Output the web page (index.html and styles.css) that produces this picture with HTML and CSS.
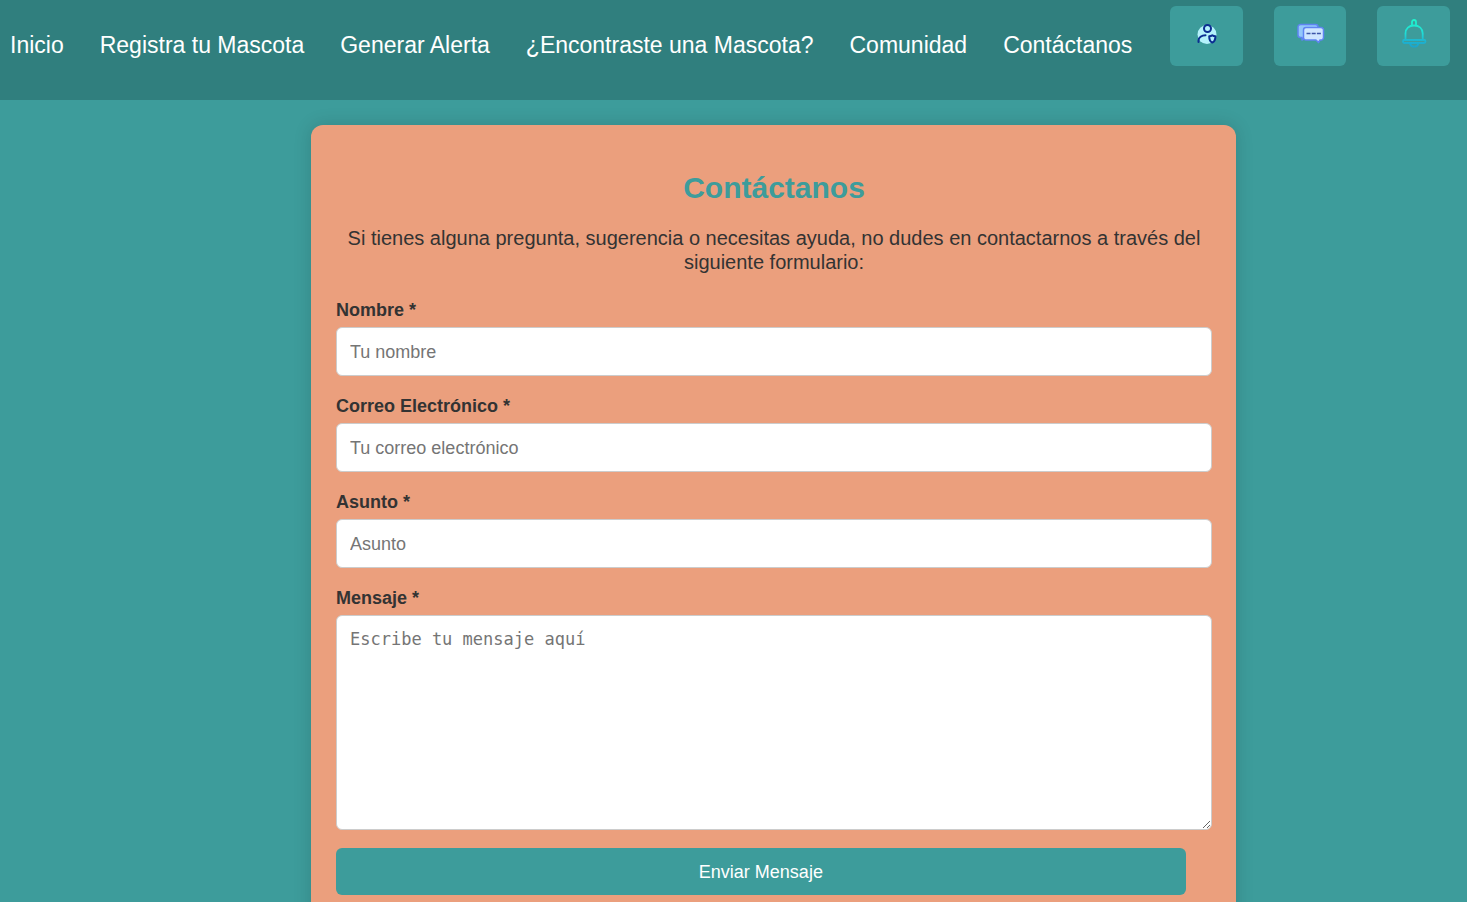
FILE: index.html
```html
<!DOCTYPE html>
<html lang="es">
<head>
  <meta charset="utf-8">
  <meta name="viewport" content="width=device-width, initial-scale=1">
  <title>Contáctanos</title>
  <link rel="stylesheet" href="styles.css">
</head>
<body>
  <header class="site-header">
    <nav class="nav">
      <a class="nav-link" href="#">Inicio</a>
      <a class="nav-link" href="#">Registra tu Mascota</a>
      <a class="nav-link" href="#">Generar Alerta</a>
      <a class="nav-link" href="#">¿Encontraste una Mascota?</a>
      <a class="nav-link" href="#">Comunidad</a>
      <a class="nav-link" href="#">Contáctanos</a>
    </nav>
    <div class="actions">
      <button class="icon-button" type="button" aria-label="Perfil">
        <svg class="icon" viewBox="0 0 30 30" fill="none" aria-hidden="true">
          <circle cx="15" cy="15.500" r="9.500" fill="#b4f1fb"/>
          <g stroke="#0b2e91" stroke-width="2" stroke-linecap="round" stroke-linejoin="round">
            <circle cx="15.500" cy="9.500" r="3.500"/>
            <path d="M6.500 23v-1.500c0-3 3.200-5.200 7-5.200"/>
            <path d="M20.300 16.200c-1 .8-2 1-3.100 1 0 3.300.8 5.500 3.100 6.300 2.300-.8 3.100-3 3.100-6.300-1.100 0-2.100-.2-3.100-1z"/>
          </g>
        </svg>
      </button>
      <button class="icon-button" type="button" aria-label="Mensajes">
        <svg class="icon" viewBox="0 0 30 30" fill="none" aria-hidden="true">
          <g stroke="#5f84f2" stroke-width="1.500" stroke-linejoin="round">
            <path d="M5.500 5.500h15a2.500 2.500 0 0 1 2.500 2.500v9a2.500 2.500 0 0 1-2.500 2.500H9.500L7 21v-2.500H5.500A2.500 2.500 0 0 1 3 16V8a2.500 2.500 0 0 1 2.500-2.500z" fill="#93c8fb"/>
            <path d="M11 8.500h15a2.500 2.500 0 0 1 2.500 2.500v7.500a2.500 2.500 0 0 1-2.500 2.500h-1L23.500 23.500 21 21H11a2.500 2.500 0 0 1-2.500-2.500V11A2.500 2.500 0 0 1 11 8.500z" fill="#cfe6ff"/>
          </g>
          <path d="M11.500 14.500h14.500" stroke="#3d56a8" stroke-width="1.300" stroke-dasharray="4 1.200"/>
        </svg>
      </button>
      <button class="icon-button" type="button" aria-label="Notificaciones">
        <svg class="icon" viewBox="0 0 30 30" fill="none" aria-hidden="true">
          <defs>
            <linearGradient id="bell" gradientUnits="userSpaceOnUse" x1="15" y1="0" x2="15" y2="29">
              <stop offset="0" stop-color="#1ff5cc"/>
              <stop offset="0.500" stop-color="#20dcd6"/>
              <stop offset="0.750" stop-color="#1eb4cf"/>
              <stop offset="1" stop-color="#1ba2cc"/>
            </linearGradient>
          </defs>
          <g stroke="url(#bell)" stroke-width="1.800" stroke-linejoin="round">
            <path d="M13 6.500V3a2 2 0 0 1 4 0v3.500"/>
            <path d="M6.500 21v-6.500C6.500 9.500 10 6.500 15 6.500s8.700 3 8.700 8V21"/>
            <path d="M5.500 21h19.500a1.200 1.200 0 0 1 0 3H5.500a1.200 1.200 0 0 1 0-3z"/>
            <path d="M11 24.500c.5 2 2.200 3.200 4.200 3.200s3.700-1.200 4.200-3.200"/>
          </g>
        </svg>
      </button>
    </div>
  </header>

  <main class="page">
    <section class="card">
      <h1 class="card-title">Contáctanos</h1>
      <p class="card-intro">Si tienes alguna pregunta, sugerencia o necesitas ayuda, no dudes en contactarnos a través del siguiente formulario:</p>
      <form class="form">
        <div class="field">
          <label class="field-label" for="nombre">Nombre *</label>
          <input class="field-control" id="nombre" type="text" placeholder="Tu nombre" required>
        </div>
        <div class="field">
          <label class="field-label" for="correo">Correo Electrónico *</label>
          <input class="field-control" id="correo" type="email" placeholder="Tu correo electrónico" required>
        </div>
        <div class="field">
          <label class="field-label" for="asunto">Asunto *</label>
          <input class="field-control" id="asunto" type="text" placeholder="Asunto" required>
        </div>
        <div class="field">
          <label class="field-label" for="mensaje">Mensaje *</label>
          <textarea class="field-control field-message" id="mensaje" rows="9" placeholder="Escribe tu mensaje aquí" required></textarea>
        </div>
        <button class="submit" type="submit">Enviar Mensaje</button>
      </form>
    </section>
  </main>
</body>
</html>
```

FILE: styles.css
```css
* {
  box-sizing: border-box;
}

body {
  margin: 0;
  background: #3d9c9b;
  color: #333;
  font-family: "Liberation Sans", Arial, sans-serif;
  font-size: 18px;
}

.site-header {
  display: flex;
  align-items: flex-start;
  gap: 38px;
  min-height: 100px;
  padding: 6px 17px 34px 10px;
  background: #307f7e;
}

.nav {
  display: flex;
  gap: 36px;
  padding-top: 26px;
}

.nav-link {
  color: #fff;
  font-size: 23px;
  line-height: 26px;
  text-decoration: none;
  white-space: nowrap;
}

.actions {
  display: flex;
  flex: 1;
  gap: 31px;
}

.icon-button {
  flex: 1;
  height: 60px;
  padding: 0 0 4px;
  border: 0;
  border-radius: 6px;
  background: #3d9c9b;
  cursor: pointer;
}

.icon {
  display: block;
  width: 30px;
  height: 30px;
  margin: 0 auto;
}

.page {
  padding: 25px 0 25px 80px;
}

.card {
  max-width: 925px;
  margin: 0 auto;
  padding: 45px 24px 45px 25px;
  border-radius: 12px;
  background: #eb9f7d;
  box-shadow: 0 0 18px rgba(0, 0, 0, 0.15);
}

.card-title {
  margin: 0 0 21px;
  color: #3d9c9b;
  font-size: 30px;
  line-height: 35px;
  text-align: center;
}

.card-intro {
  margin: 0 0 24px;
  font-size: 20px;
  line-height: 24px;
  text-align: center;
}

.form {
  display: flex;
  flex-direction: column;
  gap: 18px;
}

.field {
  display: flex;
  flex-direction: column;
  gap: 5px;
}

.field-label {
  font-weight: bold;
  line-height: 24px;
}

.field-control {
  width: 100%;
  padding: 14px 13px 12px;
  border: 1px solid #ccc;
  border-radius: 6px;
  background: #fff;
  color: #333;
  font-family: inherit;
  font-size: 18px;
  line-height: 21px;
}

.field-control::placeholder {
  color: #757575;
}

.field-message {
  height: 215px;
  padding-top: 13px;
  font-family: "DejaVu Sans Mono", monospace;
  font-size: 17px;
  resize: vertical;
}

.submit {
  width: 97%;
  padding: 14px 13px 12px;
  border: 0;
  border-radius: 6px;
  background: #3d9c9b;
  color: #fff;
  font-family: inherit;
  font-size: 18px;
  line-height: 21px;
  cursor: pointer;
}
```
